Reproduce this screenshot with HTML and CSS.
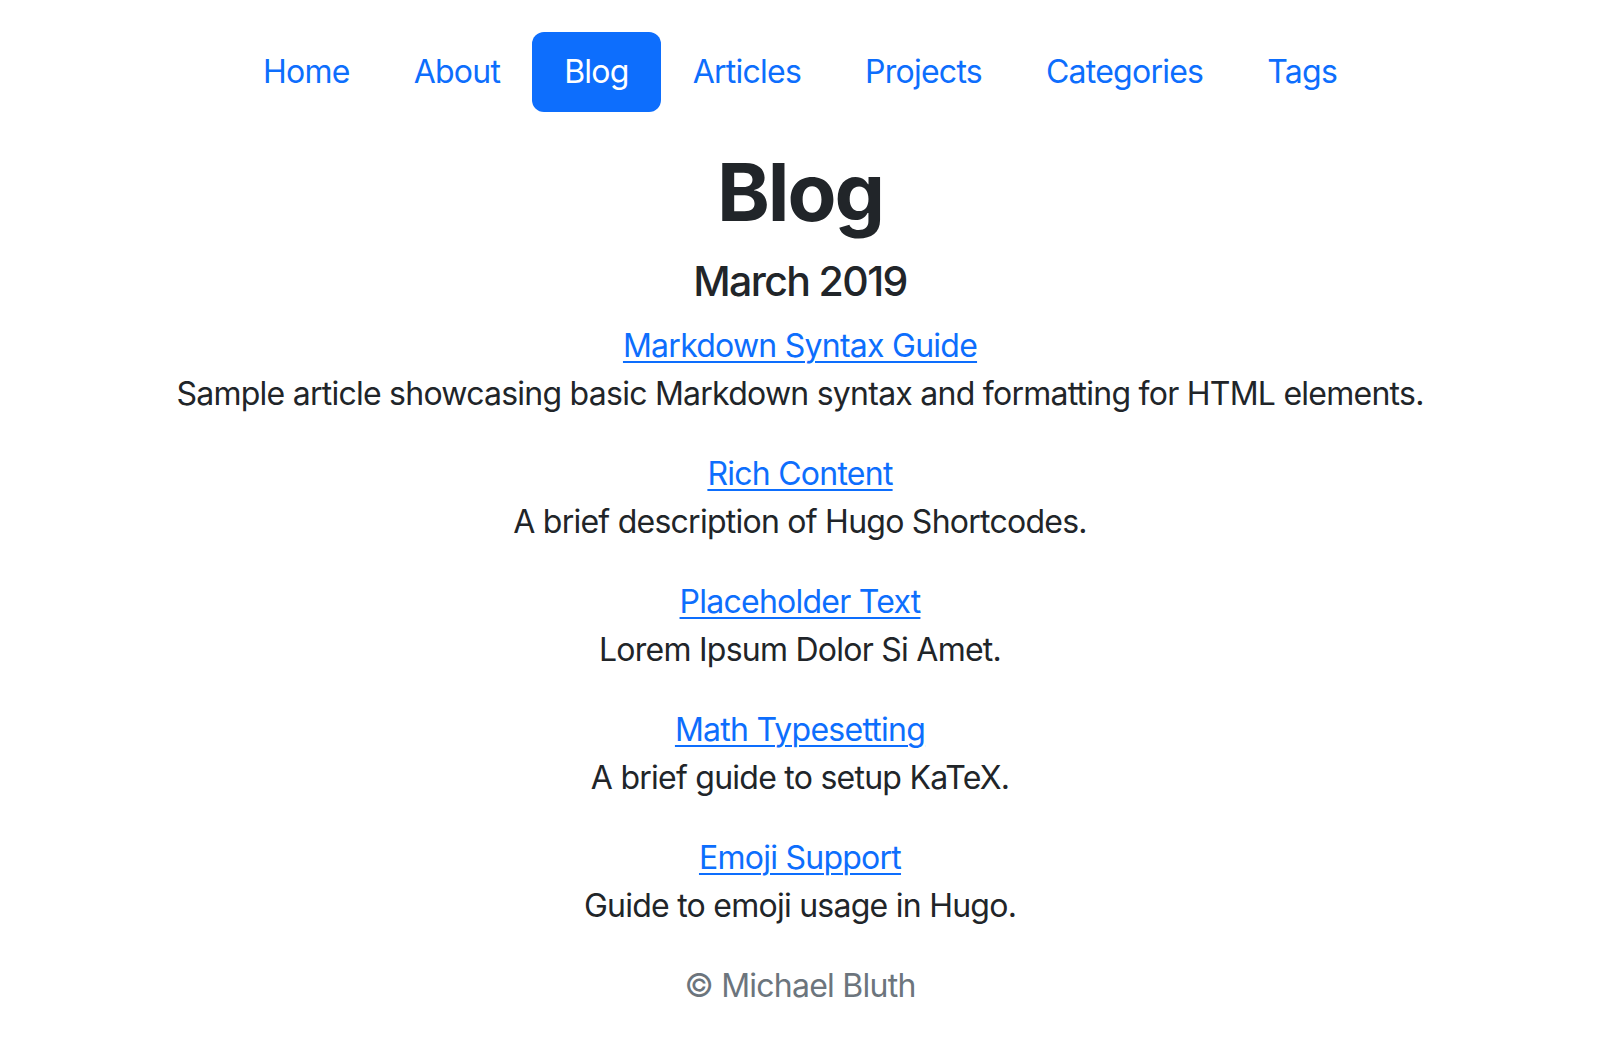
FILE: index.html
```html
<!DOCTYPE html>
<html lang="en">
<head>
<meta charset="utf-8">
<title>Blog</title>
<link rel="stylesheet" href="styles.css">
</head>
<body>
<nav class="nav">
  <a class="nav-link" href="#">Home</a>
  <a class="nav-link" href="#">About</a>
  <a class="nav-link active" href="#">Blog</a>
  <a class="nav-link" href="#">Articles</a>
  <a class="nav-link" href="#">Projects</a>
  <a class="nav-link" href="#">Categories</a>
  <a class="nav-link" href="#">Tags</a>
</nav>
<main class="main">
  <h1 class="title">Blog</h1>
  <h2 class="month">March 2019</h2>
  <div class="post">
    <a class="post-link" href="#">Markdown Syntax Guide</a>
    <p class="post-desc">Sample article showcasing basic Markdown syntax and formatting for HTML elements.</p>
  </div>
  <div class="post">
    <a class="post-link" href="#">Rich Content</a>
    <p class="post-desc">A brief description of Hugo Shortcodes.</p>
  </div>
  <div class="post">
    <a class="post-link" href="#">Placeholder Text</a>
    <p class="post-desc">Lorem Ipsum Dolor Si Amet.</p>
  </div>
  <div class="post">
    <a class="post-link" href="#">Math Typesetting</a>
    <p class="post-desc">A brief guide to setup KaTeX.</p>
  </div>
  <div class="post">
    <a class="post-link" href="#">Emoji Support</a>
    <p class="post-desc">Guide to emoji usage in Hugo.</p>
  </div>
</main>
<footer class="footer">© Michael Bluth</footer>
</body>
</html>
```
FILE: styles.css
```css
html, body {
  margin: 0;
  padding: 0;
  background: #ffffff;
}
body {
  font-family: Inter, "Noto Sans", "Liberation Sans", sans-serif;
  font-size: 32px;
  line-height: 1.5;
  letter-spacing: -0.75px;
  color: #212529;
  text-align: center;
}
.nav {
  display: flex;
  justify-content: center;
  padding-top: 32px;
  margin-bottom: 32px;
}
.nav-link {
  display: block;
  padding: 16px 32px;
  color: #0d6efd;
  text-decoration: none;
  border-radius: 12px;
}
.nav-link.active {
  background: #0d6efd;
  color: #ffffff;
}
.main {
  display: flex;
  flex-direction: column;
  align-items: center;
}
.title {
  margin: 0 0 17px;
  font-size: 80px;
  line-height: 1.2;
  font-weight: 700;
  letter-spacing: -2px;
}
.month {
  margin: 0 0 16px;
  font-size: 41px;
  line-height: 1.2;
  font-weight: 500;
  letter-spacing: -1.6px;
}
.post {
  display: flex;
  flex-direction: column;
  align-items: center;
  margin-bottom: 32px;
}
.post-link {
  color: #0d6efd;
  text-decoration: underline;
  text-underline-offset: 4px;
  text-decoration-thickness: 2px;
}
.post-desc {
  margin: 0;
}
.footer {
  color: #6c757d;
  margin-top: 0;
}
```
